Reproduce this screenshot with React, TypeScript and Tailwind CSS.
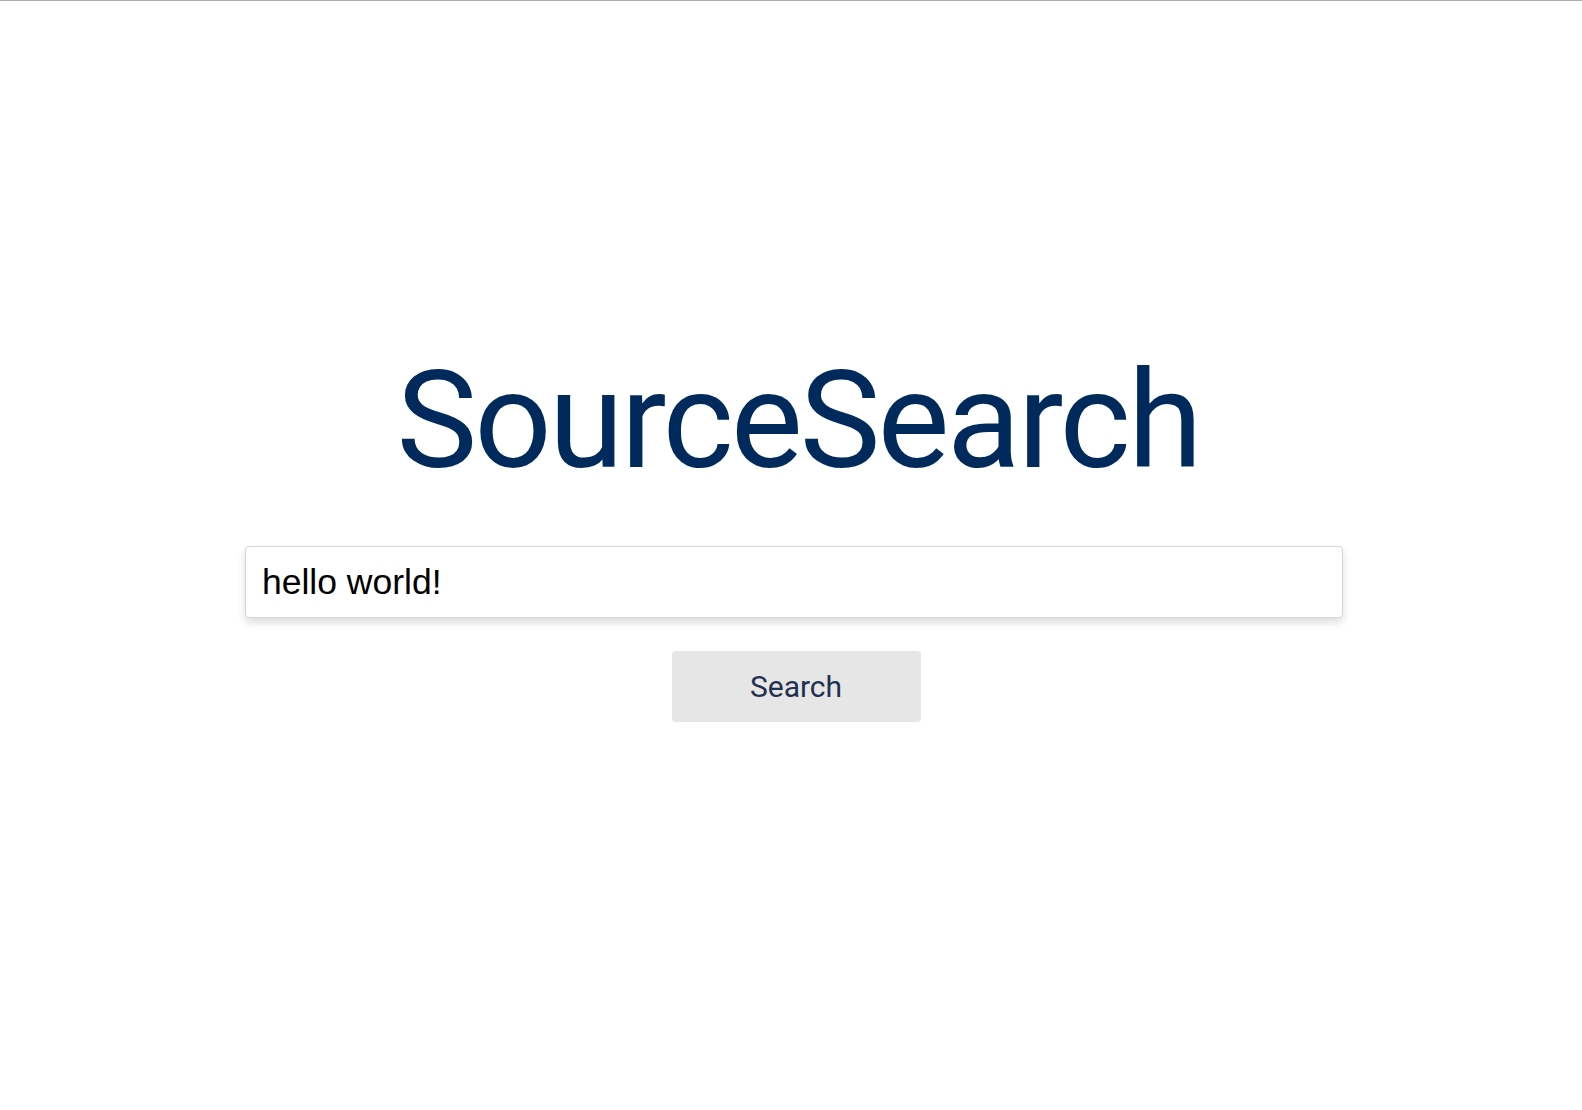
import React from "react";

export default function App() {
  return (
    <div className="min-h-[1110px] w-full bg-white border-t border-[#acacac]">
      <div className="flex flex-col items-center pl-[6px] pt-[352px]">
        <h1 className="ml-[8px] text-[136px] leading-none tracking-[-3px] text-[#002a5c] font-normal font-[Roboto,sans-serif]">
          SourceSearch
        </h1>
        <input
          type="text"
          defaultValue="hello world!"
          className="mt-[57px] w-[1098px] h-[72px] rounded-[4px] border border-[#d6d6d6] bg-white px-[16px] text-[35.5px] text-black shadow-[0_5px_8px_rgba(0,0,0,0.13)] outline-none font-['Liberation_Sans',Arial,sans-serif]"
        />
        <button className="ml-[4px] mt-[33px] w-[249px] h-[71px] rounded-[4px] bg-[#e6e6e6] text-[30px] text-[#22314f] font-[Roboto,sans-serif]">
          Search
        </button>
      </div>
    </div>
  );
}
